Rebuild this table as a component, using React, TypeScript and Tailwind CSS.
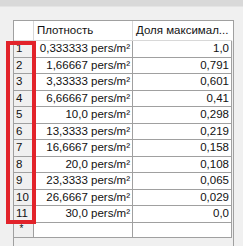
import React from "react";

const rows: [string, string, string][] = [
  ["1", "0,333333 pers/m²", "1,0"],
  ["2", "1,66667 pers/m²", "0,791"],
  ["3", "3,33333 pers/m²", "0,601"],
  ["4", "6,66667 pers/m²", "0,41"],
  ["5", "10,0 pers/m²", "0,298"],
  ["6", "13,3333 pers/m²", "0,219"],
  ["7", "16,6667 pers/m²", "0,158"],
  ["8", "20,0 pers/m²", "0,108"],
  ["9", "23,3333 pers/m²", "0,065"],
  ["10", "26,6667 pers/m²", "0,029"],
  ["11", "30,0 pers/m²", "0,0"],
];

export default function App() {
  return (
    <div
      className="relative w-[243px] h-[246px] overflow-hidden bg-[#f0f0f0] flex flex-col text-[11.5px] text-[#111]"
      style={{ fontFamily: '"Liberation Sans", Arial, sans-serif' }}
    >
      <div className="h-[7px] bg-[#d9d9d9] border-b border-[#e4e4e4]" />
      <div className="ml-[13px] mt-[13px] w-[221px] flex-1 border-l border-t border-r border-[#a0a0a0] bg-[#f0f0f0] flex flex-col">
        {/* header */}
        <div className="flex h-[20px] bg-white">
          <div className="w-[20px] border-r border-b border-[#d8d8d8]" />
          <div className="w-[99px] border-r border-b border-[#d8d8d8] flex items-center pl-[3px] pt-[1px]">
            Плотность
          </div>
          <div className="w-[99px] border-b border-[#d8d8d8] flex items-center pl-[3px] pt-[1px]">
            Доля максимал...
          </div>
        </div>
        {rows.map(([n, d, v]) => (
          <div key={n} className="flex h-[16.5px]">
            <div className="w-[20px] bg-[#f0f0f0] border-r border-b border-[#a0a0a0] flex items-center pl-[2px]">
              {n}
            </div>
            <div className="w-[99px] bg-white border-r border-b border-[#a0a0a0] flex items-center justify-end pr-[2px] whitespace-nowrap">
              {d}
            </div>
            <div className="w-[99px] bg-white border-r border-b border-[#a0a0a0] flex items-center justify-end pr-[2px]">
              {v}
            </div>
          </div>
        ))}
        <div className="flex h-[15px]">
          <div className="w-[20px] bg-[#f0f0f0] border-r border-b border-[#a0a0a0] flex items-start justify-center pr-[4px] pt-[1px] text-[10px] leading-[10px]">
            *
          </div>
          <div className="w-[99px] bg-white border-r border-b border-[#a0a0a0]" />
          <div className="w-[99px] bg-white border-r border-b border-[#a0a0a0]" />
        </div>
      </div>
      {/* highlight around the row numbers */}
      <div className="absolute left-[6px] top-[41px] w-[30px] h-[183px] border-[4px] border-[#e2232a] pointer-events-none" />
    </div>
  );
}
